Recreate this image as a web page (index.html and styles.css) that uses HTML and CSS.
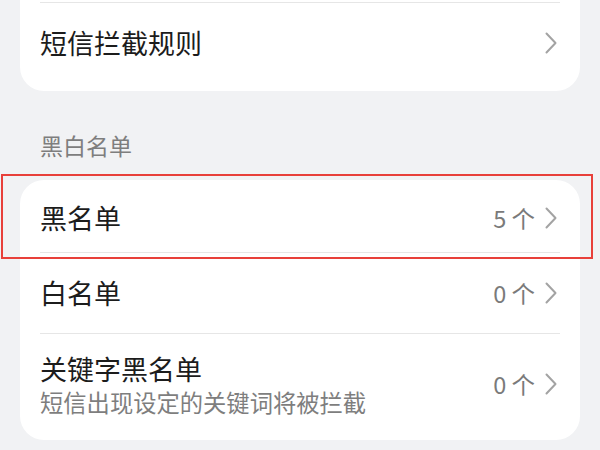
FILE: index.html
```html
<!DOCTYPE html>
<html lang="zh-CN">
<head>
<meta charset="utf-8">
<link rel="stylesheet" href="styles.css">
</head>
<body>
<div class="page">
  <div class="card card-cut">
    <div class="row row-first">
      <span class="title">短信拦截规则</span>
      <span class="trail">
        <svg class="chev" width="12" height="22" viewBox="0 0 12 22"><path d="M1.5 1.5 L10.5 11 L1.5 20.5" fill="none" stroke="#a3a3a3" stroke-width="2" stroke-linecap="round" stroke-linejoin="round"/></svg>
      </span>
    </div>
  </div>

  <div class="section-label">黑白名单</div>

  <div class="card card-list">
    <div class="row row-black">
      <span class="title">黑名单</span>
      <span class="trail">
        <span class="value">5 个</span>
        <svg class="chev" width="12" height="22" viewBox="0 0 12 22"><path d="M1.5 1.5 L10.5 11 L1.5 20.5" fill="none" stroke="#a3a3a3" stroke-width="2" stroke-linecap="round" stroke-linejoin="round"/></svg>
      </span>
    </div>
    <div class="row row-sep">
      <span class="title">白名单</span>
      <span class="trail">
        <span class="value">0 个</span>
        <svg class="chev" width="12" height="22" viewBox="0 0 12 22"><path d="M1.5 1.5 L10.5 11 L1.5 20.5" fill="none" stroke="#a3a3a3" stroke-width="2" stroke-linecap="round" stroke-linejoin="round"/></svg>
      </span>
    </div>
    <div class="row row-sep row-tall">
      <span class="texts">
        <span class="title">关键字黑名单</span>
        <span class="sub">短信出现设定的关键词将被拦截</span>
      </span>
      <span class="trail">
        <span class="value">0 个</span>
        <svg class="chev" width="12" height="22" viewBox="0 0 12 22"><path d="M1.5 1.5 L10.5 11 L1.5 20.5" fill="none" stroke="#a3a3a3" stroke-width="2" stroke-linecap="round" stroke-linejoin="round"/></svg>
      </span>
    </div>
  </div>
</div>
<div class="highlight"></div>
</body>
</html>
```

FILE: styles.css
```css
html, body {
  margin: 0;
  padding: 0;
  background: #f1f2f4;
  width: 600px;
  height: 450px;
  overflow: hidden;
  font-family: "Noto Sans CJK SC", "Noto Sans", sans-serif;
}

.page {
  padding: 0 20px;
  display: flex;
  flex-direction: column;
}

.card {
  background: #ffffff;
  border-radius: 24px;
}

.card-cut {
  border-radius: 0 0 24px 24px;
  padding-top: 2px;
  padding-bottom: 8px;
}

.row {
  margin: 0 20px;
  display: flex;
  align-items: center;
  justify-content: space-between;
  height: 80px;
  box-sizing: border-box;
}

.row-first {
  border-top: 1px solid #e6e6e6;
  height: 81px;
}

.row-sep {
  border-top: 1px solid #e6e6e6;
}

.card-list {
  margin-top: 23px;
  padding-top: 4px;
  padding-bottom: 6px;
}

.row-black {
  height: 68px;
}

.row-sep.row-sep {
  height: 81px;
}

.row-tall.row-tall {
  height: 101px;
}

.title {
  font-size: 27px;
  line-height: 36px;
  color: #1c1c1c;
}

.texts {
  display: flex;
  flex-direction: column;
}

.sub {
  font-size: 23.3px;
  line-height: 30px;
  color: #7e7e7e;
}

.section-label {
  margin-top: 42px;
  padding-left: 20px;
  font-size: 23px;
  line-height: 24px;
  color: #7e7e7e;
}

.trail {
  display: flex;
  align-items: center;
}

.value {
  font-size: 23.5px;
  line-height: 30px;
  color: #7a7a7a;
}

.chev {
  display: block;
  margin-left: 10px;
  margin-right: 3px;
}

.highlight {
  position: absolute;
  left: 1px;
  top: 174px;
  width: 588px;
  height: 81px;
  border: 2px solid #e8403a;
}
```
